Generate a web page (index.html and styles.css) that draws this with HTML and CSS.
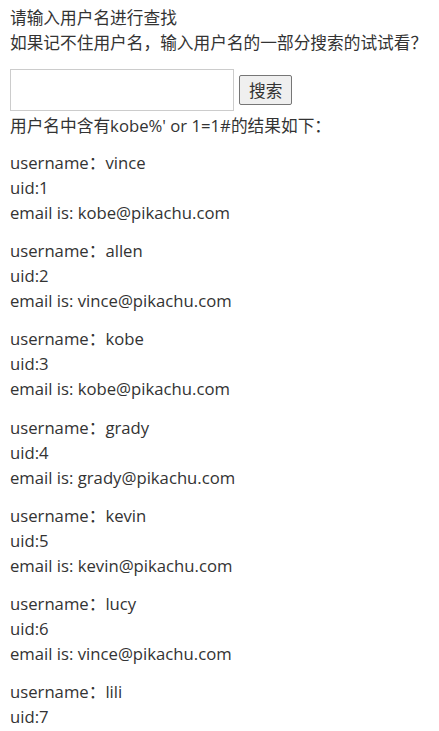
FILE: index.html
```html
<!DOCTYPE html>
<html lang="zh-CN">
<head>
  <meta charset="UTF-8">
  <title>搜索型注入</title>
  <link rel="stylesheet" href="styles.css">
</head>
<body>
  <div class="page">
    <p class="tips">请输入用户名进行查找<br>如果记不住用户名，输入用户名的一部分搜索的试试看？</p>
    <form class="search" method="get">
      <input class="name" type="text" name="name">
      <input class="submit" type="submit" name="submit" value="搜索">
    </form>
    <p class="notice">用户名中含有kobe%' or 1=1#的结果如下：</p>
    <div class="result">
      <p class="row">username：vince<br>uid:1<br>email is: kobe@pikachu.com</p>
      <p class="row">username：allen<br>uid:2<br>email is: vince@pikachu.com</p>
      <p class="row">username：kobe<br>uid:3<br>email is: kobe@pikachu.com</p>
      <p class="row">username：grady<br>uid:4<br>email is: grady@pikachu.com</p>
      <p class="row">username：kevin<br>uid:5<br>email is: kevin@pikachu.com</p>
      <p class="row">username：lucy<br>uid:6<br>email is: vince@pikachu.com</p>
      <p class="row">username：lili<br>uid:7<br>email is: lili@pikachu.com</p>
    </div>
  </div>
</body>
</html>
```

FILE: styles.css
```css
body {
  margin: 0;
  color: #333;
  font-family: "Open Sans", "Noto Sans CJK SC", sans-serif;
  font-size: 16.7px;
  line-height: 25px;
}

.page {
  padding: 5px 10px;
}

p {
  margin: 0;
}

.search {
  display: flex;
  align-items: center;
  gap: 5px;
  margin: 14px 0 2px;
}

.search .name {
  width: 224px;
  height: 42px;
  box-sizing: border-box;
  border: 1px solid #ccc;
  margin: 0;
}

.search .submit {
  height: 30px;
  padding: 0 9px;
  margin: 0;
  font-family: "Noto Sans CJK SC", sans-serif;
  font-size: 16.7px;
  color: #333;
  background: #efefef;
  border: 1px solid #767676;
  border-radius: 2px;
}

.result .row {
  margin-top: 13.2px;
}

.result .row:first-child {
  margin-top: 12px;
}
```
